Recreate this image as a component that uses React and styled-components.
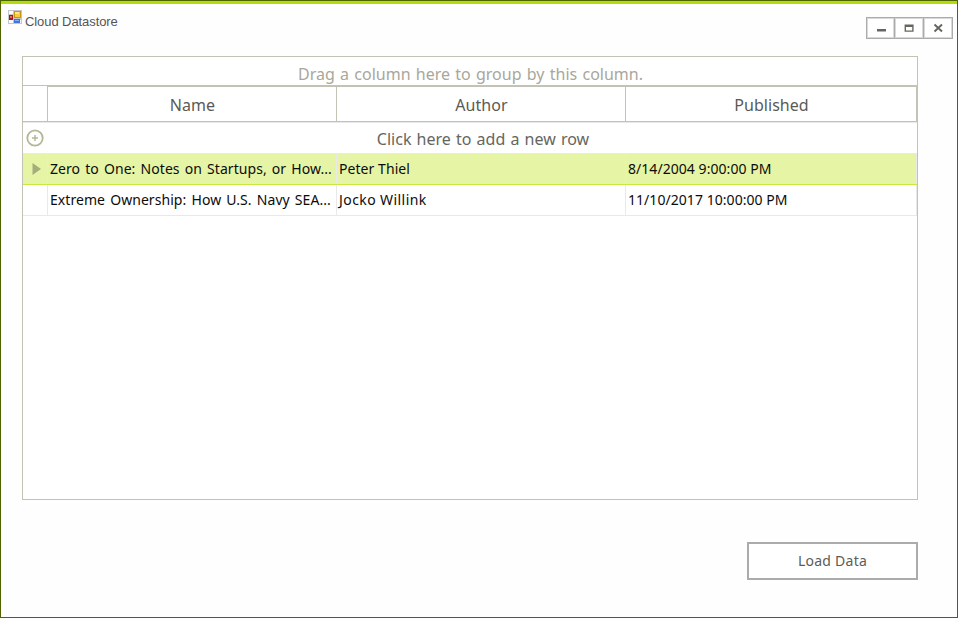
import React from "react";
import styled, { createGlobalStyle } from "styled-components";

const LINE = "#c3c3b5";
const SOFT = "#e9e9e9";

const GlobalStyle = createGlobalStyle`
  * { box-sizing: border-box; }
  body { margin: 0; background: #fff; }
`;

const Window = styled.div`
  width: 958px;
  height: 618px;
  display: flex;
  flex-direction: column;
  background: #fefefe;
  border: 1px solid #4f6400;
  font-family: "Noto Sans", "Open Sans", sans-serif;
  white-space: nowrap;
`;

const AccentBar = styled.div`
  flex: none;
  height: 3px;
  background: #b0dd0b;
`;

const TitleBar = styled.header`
  flex: none;
  height: 52px;
  display: flex;
  justify-content: space-between;
  align-items: flex-start;
  padding: 6px 4px 0 7px;
`;

const TitleGroup = styled.div`
  display: flex;
  align-items: flex-start;
  gap: 3px;
`;

const Title = styled.h1`
  margin: 4px 0 0;
  font: 400 13px/16px "Liberation Sans", Arial, sans-serif;
  letter-spacing: -0.08px;
  color: #555;
`;

const WindowButtons = styled.div`
  display: flex;
  margin-top: 7px;
`;

const WindowButton = styled.button`
  width: 30px;
  height: 22px;
  display: flex;
  align-items: center;
  justify-content: center;
  padding: 0;
  background: #fff;
  border: 1px solid #ababab;
  outline: 1px solid #d9d9d9;
  outline-offset: -2px;
  & + & { margin-left: -1px; }
  &:first-child { width: 29px; }
`;

const Grid = styled.main`
  flex: none;
  width: 896px;
  height: 444px;
  margin-left: 21px;
  display: flex;
  flex-direction: column;
  background: #fff;
  border: 1px solid ${LINE};
`;

const GroupPanel = styled.div`
  flex: none;
  height: 29px;
  display: flex;
  align-items: center;
  justify-content: center;
  padding: 6px 0 0 1px;
  border-bottom: 1px solid ${LINE};
  font-size: 16px;
  line-height: 22px;
  word-spacing: 1.1px;
  color: #a8a79b;
`;

const columns = "24px 289px 289px 1fr";

const HeaderRow = styled.div`
  flex: none;
  height: 36px;
  display: grid;
  grid-template-columns: ${columns};
  border-bottom: 1px solid ${LINE};
`;

const HeaderCell = styled.div`
  display: flex;
  align-items: center;
  justify-content: center;
  padding: 1px 0 0 1px;
  border-left: 1px solid ${LINE};
  border-top: 1px solid ${LINE};
  border-right: ${(p) => (p.$last ? `1px solid ${LINE}` : "none")};
  font-size: 16px;
  letter-spacing: 0.05px;
  line-height: 22px;
  color: #5a5a55;
`;

const NewRow = styled.div`
  flex: none;
  height: 32px;
  display: grid;
  grid-template-columns: 24px 1fr;
  align-items: center;
  border-top: 1px solid ${SOFT};
  border-bottom: 1px solid ${SOFT};
`;

const NewRowPrompt = styled.div`
  padding: 1px 0 0 2px;
  text-align: center;
  font-size: 16px;
  line-height: 22px;
  word-spacing: 1px;
  color: #666660;
`;

const DataRow = styled.div`
  flex: none;
  height: 31px;
  display: grid;
  grid-template-columns: ${columns};
  background: ${(p) => (p.$selected ? "#e6f5a5" : "#fff")};
  border-bottom: 1px solid ${(p) => (p.$selected ? "#c9e942" : SOFT)};
`;

const Gutter = styled.div`
  display: flex;
  align-items: center;
  justify-content: center;
`;

const RowMarker = styled(Gutter)`
  padding-left: 3px;
`;

const Cell = styled.div`
  padding: 4px 0 0 2px;
  border-left: 1px solid ${SOFT};
  border-right: ${(p) => (p.$last ? `1px solid ${SOFT}` : "none")};
  overflow: hidden;
  font-size: 14px;
  line-height: 22px;
  letter-spacing: ${(p) => p.$tracking || 0}px;
  word-spacing: ${(p) => p.$gap || 0}px;
  color: #0c0c0c;
`;

const Footer = styled.footer`
  display: flex;
  justify-content: flex-end;
  padding: 42px 39px 0 0;
`;

const LoadButton = styled.button`
  width: 171px;
  height: 38px;
  padding: 0;
  background: #fff;
  border: 2px solid #ababab;
  font-family: inherit;
  font-size: 14px;
  letter-spacing: 0.25px;
  line-height: 20px;
  color: #5c5c57;
`;

const AppIcon = () => (
  <svg width="14" height="14" viewBox="0 0 14 14" shapeRendering="crispEdges">
    <path d="M0 0h14v14H0z" fill="#c4c6cc" />
    <path d="M1 1h4v3H1zM1 10h4v3H1zM12 10h1v3h-1z" fill="#fafafa" />
    <path d="M1 5h4v5H1z" fill="#a8161b" />
    <path d="M2 6h2v2H2z" fill="#e46a5e" />
    <path d="M6 1h7v7H6z" fill="#c8960f" />
    <path d="M7 2h5v5H7z" fill="#fcc938" />
    <path d="M7 2h4v2H7z" fill="#ffe58c" />
    <path d="M6 9h6v4H6z" fill="#3f74dd" />
    <path d="M7 10h4v1H7z" fill="#86adf5" />
  </svg>
);

const MinimizeIcon = () => (
  <svg width="14" height="14" viewBox="0 0 14 14">
    <path d="M3 8h9v2.5H3z" fill="#666660" />
  </svg>
);

const MaximizeIcon = () => (
  <svg width="14" height="14" viewBox="0 0 14 14">
    <path d="M2.6 3.4h9v7.3h-9zM4 6v3.5h6.2V6z" fill="#666660" fillRule="evenodd" />
  </svg>
);

const CloseIcon = () => (
  <svg width="14" height="14" viewBox="0 0 14 14">
    <path d="M3.5 3.5l7.5 7M11 3.5l-7.5 7" stroke="#666660" strokeWidth="1.9" />
  </svg>
);

const AddIcon = () => (
  <svg width="18" height="18" viewBox="0 0 18 18" fill="none" stroke="#b4b797">
    <circle cx="9" cy="9" r="7.7" strokeWidth="1.8" />
    <path d="M6 9h6M9 6v6" strokeWidth="1.5" />
  </svg>
);

const CurrentRowIcon = () => (
  <svg width="9" height="12" viewBox="0 0 9 12">
    <path d="M0.5 0l8.5 6-8.5 6z" fill="#a3ae7c" />
  </svg>
);

const books = [
  {
    name: "Zero to One: Notes on Startups, or How...",
    author: "Peter Thiel",
    published: "8/14/2004 9:00:00 PM",
    selected: true,
    nameGap: 1.4,
    authorTracking: 0.06,
  },
  {
    name: "Extreme Ownership: How U.S. Navy SEA...",
    author: "Jocko Willink",
    published: "11/10/2017 10:00:00 PM",
    nameGap: 1.4,
    authorTracking: 0.42,
  },
];

export default function App() {
  return (
    <>
      <GlobalStyle />
      <Window>
        <AccentBar />
        <TitleBar>
          <TitleGroup>
            <AppIcon />
            <Title>Cloud Datastore</Title>
          </TitleGroup>
          <WindowButtons>
            <WindowButton aria-label="Minimize"><MinimizeIcon /></WindowButton>
            <WindowButton aria-label="Maximize"><MaximizeIcon /></WindowButton>
            <WindowButton aria-label="Close"><CloseIcon /></WindowButton>
          </WindowButtons>
        </TitleBar>
        <Grid>
          <GroupPanel>Drag a column here to group by this column.</GroupPanel>
          <HeaderRow>
            <Gutter />
            <HeaderCell>Name</HeaderCell>
            <HeaderCell>Author</HeaderCell>
            <HeaderCell $last>Published</HeaderCell>
          </HeaderRow>
          <NewRow>
            <Gutter><AddIcon /></Gutter>
            <NewRowPrompt>Click here to add a new row</NewRowPrompt>
          </NewRow>
          {books.map((b) => (
            <DataRow key={b.name} $selected={b.selected}>
              <RowMarker>{b.selected && <CurrentRowIcon />}</RowMarker>
              <Cell $gap={b.nameGap} $tracking={0.06}>{b.name}</Cell>
              <Cell $tracking={b.authorTracking}>{b.author}</Cell>
              <Cell $last $tracking={0.05}>{b.published}</Cell>
            </DataRow>
          ))}
        </Grid>
        <Footer>
          <LoadButton>Load Data</LoadButton>
        </Footer>
      </Window>
    </>
  );
}
